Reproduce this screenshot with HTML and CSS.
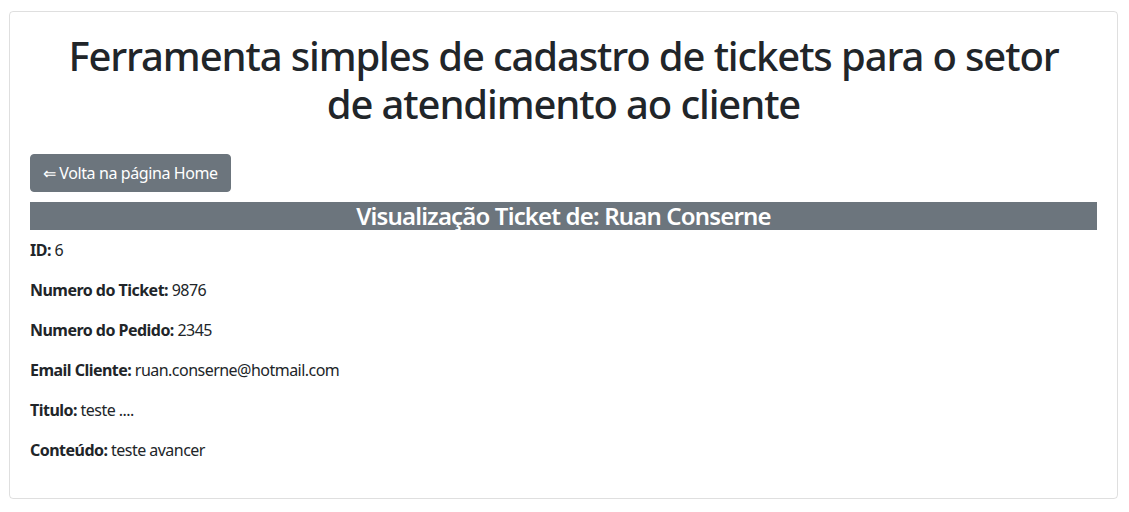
FILE: index.html
```html
<!DOCTYPE html>
<html lang="pt-BR">
<head>
<meta charset="utf-8">
<title>Visualização Ticket</title>
<link rel="stylesheet" href="styles.css">
</head>
<body>
<div class="page">
  <div class="card">
    <h1 class="title">Ferramenta simples de cadastro de tickets para o setor de atendimento ao cliente</h1>
    <a class="btn" href="#">⇐ Volta na página Home</a>
    <h4 class="bar">Visualização Ticket de: Ruan Conserne</h4>
    <p class="field"><strong>ID:</strong> 6</p>
    <p class="field"><strong>Numero do Ticket:</strong> 9876</p>
    <p class="field"><strong>Numero do Pedido:</strong> 2345</p>
    <p class="field"><strong>Email Cliente:</strong> ruan.conserne@hotmail.com</p>
    <p class="field"><strong>Titulo:</strong> teste ....</p>
    <p class="field"><strong>Conteúdo:</strong> teste avancer</p>
  </div>
</div>
</body>
</html>
```

FILE: styles.css
```css
* { box-sizing: border-box; }
html, body { margin: 0; padding: 0; background: #fff; }
body {
  font-family: "Noto Sans", "Open Sans", sans-serif;
  font-size: 16px;
  line-height: 1.5;
  color: #212529;
  letter-spacing: -0.033em;
}
.page {
  padding: 11px 11px 0 9px;
}
.card {
  display: flex;
  flex-direction: column;
  align-items: flex-start;
  border: 1px solid rgba(0,0,0,.125);
  border-radius: 4px;
  padding: 20px;
}
.title {
  align-self: stretch;
  margin: 0 0 26px;
  padding: 0 15px;
  font-size: 40px;
  font-weight: 500;
  line-height: 48px;
  text-align: center;
  letter-spacing: -0.028em;
}
.btn {
  display: inline-block;
  background: #6c757d;
  color: #fff;
  text-decoration: none;
  border-radius: 4px;
  padding: 6px 12px;
  line-height: 24px;
  font-size: 16px;
  height: 38px;
  border: 1px solid #6c757d;
  margin-bottom: 10px;
  letter-spacing: -0.025em;
}
.bar {
  align-self: stretch;
  margin: 0 0 8px;
  background: #6c757d;
  color: #fff;
  text-align: center;
  font-size: 24px;
  font-weight: 600;
  line-height: 28px;
  letter-spacing: -0.035em;
}
.field {
  margin: 0 0 16px;
}
.field strong { font-weight: 700; }
```
